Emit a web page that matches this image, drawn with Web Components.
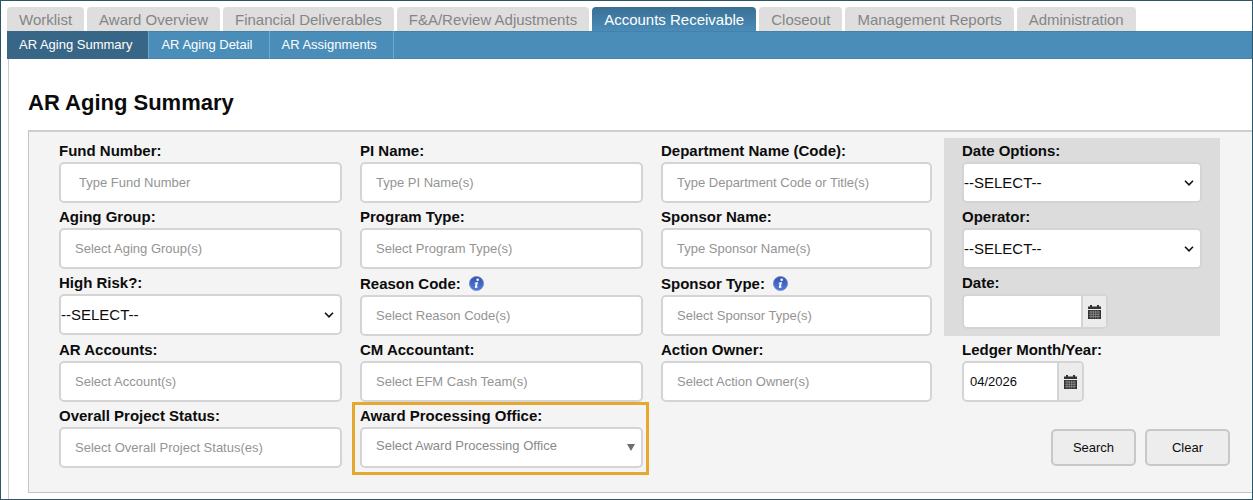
<!DOCTYPE html>
<html lang="en">
<head>
<meta charset="utf-8">
<meta name="viewport" content="width=device-width, initial-scale=1">
<title>AR Aging Summary</title>
<style>
  html, body { margin: 0; }
  body {
    font-family: "Liberation Sans", Arial, sans-serif;
    color: #0c0c0c;
  }
</style>
</head>
<body>

<page-frame>
  <nav-tabs slot="nav">
    <nav-tab>Worklist</nav-tab>
    <nav-tab>Award Overview</nav-tab>
    <nav-tab>Financial Deliverables</nav-tab>
    <nav-tab>F&amp;A/Review Adjustments</nav-tab>
    <nav-tab active>Accounts Receivable</nav-tab>
    <nav-tab>Closeout</nav-tab>
    <nav-tab>Management Reports</nav-tab>
    <nav-tab>Administration</nav-tab>
  </nav-tabs>
  <sub-nav slot="nav">
    <sub-nav-item active>AR Aging Summary</sub-nav-item>
    <sub-nav-item>AR Aging Detail</sub-nav-item>
    <sub-nav-item>AR Assignments</sub-nav-item>
  </sub-nav>

  <span slot="title">AR Aging Summary</span>

  <filter-panel>
    <form-field label="Fund Number:" placeholder="Type Fund Number" indent></form-field>
    <form-field label="PI Name:" placeholder="Type PI Name(s)"></form-field>
    <form-field label="Department Name (Code):" placeholder="Type Department Code or Title(s)" class="third"></form-field>
    <field-group>
      <form-field type="select" label="Date Options:" value="--SELECT--"></form-field>
      <form-field type="select" label="Operator:" value="--SELECT--"></form-field>
      <form-field type="date" label="Date:"></form-field>
    </field-group>

    <form-field label="Aging Group:" placeholder="Select Aging Group(s)"></form-field>
    <form-field label="Program Type:" placeholder="Select Program Type(s)"></form-field>
    <form-field label="Sponsor Name:" placeholder="Type Sponsor Name(s)" class="third"></form-field>

    <form-field type="select" label="High Risk?:" value="--SELECT--"></form-field>
    <form-field label="Reason Code:" placeholder="Select Reason Code(s)" info></form-field>
    <form-field label="Sponsor Type:" placeholder="Select Sponsor Type(s)" class="third" info></form-field>

    <form-field label="AR Accounts:" placeholder="Select Account(s)"></form-field>
    <form-field label="CM Accountant:" placeholder="Select EFM Cash Team(s)"></form-field>
    <form-field label="Action Owner:" placeholder="Select Action Owner(s)" class="third"></form-field>
    <form-field type="month" label="Ledger Month/Year:" value="04/2026" class="fourth"></form-field>

    <form-field label="Overall Project Status:" placeholder="Select Overall Project Status(es)"></form-field>
    <form-field type="combo" label="Award Processing Office:" value="Select Award Processing Office" highlight></form-field>
    <button-bar>
      <form-button>Search</form-button>
      <form-button>Clear</form-button>
    </button-bar>
  </filter-panel>
</page-frame>

<script>
/**
 * `<page-frame>` is the outer shell: navigation on top, then a title
 * and the content below it.
 */
class PageFrame extends HTMLElement {
  constructor() {
    super();
    const shadow = this.attachShadow({mode: 'open'});
    shadow.innerHTML = `<style>
    :host {
      display: block;
      box-sizing: border-box;
      min-height: 100vh;
      padding: 6px 0 0 6px;
      border: 1px solid #2c5568;
      background: #fff;
    }
    main {
      margin-left: 1px;
      padding: 28px 0 6px 19px;
      border-left: 1px solid #ccc;
    }
    h1 {
      margin: 0 0 12px;
      font-size: 22px;
      line-height: 31px;
    }
    </style>
    <slot name="nav"></slot>
    <main>
      <h1><slot name="title"></slot></h1>
      <slot></slot>
    </main>`;
  }
}
customElements.define('page-frame', PageFrame);

/**
 * `<nav-tabs>` is the row of top level tabs.
 */
class NavTabs extends HTMLElement {
  constructor() {
    super();
    const shadow = this.attachShadow({mode: 'open'});
    shadow.innerHTML = `<style>
    :host { display: block; }
    nav { display: flex; gap: 3px; }
    </style>
    <nav aria-label="Main"><slot></slot></nav>`;
  }
}
customElements.define('nav-tabs', NavTabs);

class NavTab extends HTMLElement {
  constructor() {
    super();
    const shadow = this.attachShadow({mode: 'open'});
    shadow.innerHTML = `<style>
    :host { display: block; }
    a {
      display: block;
      padding: 1px 12px 0;
      border-radius: 4px 4px 0 0;
      background: #dedede;
      color: #858585;
      font-size: 15px;
      line-height: 23px;
      text-decoration: none;
      white-space: nowrap;
    }
    :host([active]) a {
      background: linear-gradient(#3a6f94, #4a8cb8);
      color: #fff;
    }
    </style>
    <a href="#"><slot></slot></a>`;
  }
}
customElements.define('nav-tab', NavTab);

/**
 * `<sub-nav>` is the blue bar under the tabs.
 */
class SubNav extends HTMLElement {
  constructor() {
    super();
    const shadow = this.attachShadow({mode: 'open'});
    shadow.innerHTML = `<style>
    :host { display: block; }
    nav {
      display: flex;
      background: #4b8db9;
      box-shadow: inset 0 1px #4382ab, inset 0 -1px #4783aa;
    }
    </style>
    <nav aria-label="Section"><slot></slot></nav>`;
  }
}
customElements.define('sub-nav', SubNav);

class SubNavItem extends HTMLElement {
  constructor() {
    super();
    const shadow = this.attachShadow({mode: 'open'});
    shadow.innerHTML = `<style>
    :host { display: block; }
    a {
      display: block;
      padding: 0 16px 0 12px;
      border-right: 1px solid #6ea8cf;
      color: #fff;
      font-size: 13px;
      line-height: 28px;
      text-decoration: none;
      white-space: nowrap;
    }
    :host([active]) a { background: #386686; }
    </style>
    <a href="#"><slot></slot></a>`;
  }
}
customElements.define('sub-nav-item', SubNavItem);

/**
 * `<filter-panel>` lays its fields out in four columns. A `<field-group>`
 * takes the last column of the first three rows.
 */
class FilterPanel extends HTMLElement {
  constructor() {
    super();
    const shadow = this.attachShadow({mode: 'open'});
    shadow.innerHTML = `<style>
    :host {
      display: block;
      border: 1px solid #c4c4c4;
      border-top: 2px solid #cfcfcf;
      border-right: 0;
      background: #f4f4f4;
    }
    form {
      display: grid;
      grid-template-columns: 289fr 289fr 271fr 276fr;
      gap: 5px 12px;
      padding: 10px 32px 24px 30px;
    }
    ::slotted(form-field) { margin-right: 6px; }
    ::slotted(.third) { margin-right: 0; }
    ::slotted(.fourth) { margin-left: 18px; }
    ::slotted(field-group) {
      grid-column: 4;
      grid-row: 1 / span 3;
      margin-top: -4px;
    }
    ::slotted(button-bar) { grid-column: 4; margin: 20px -10px 0 0; }
    </style>
    <form><slot></slot></form>`;
  }
}
customElements.define('filter-panel', FilterPanel);

class FieldGroup extends HTMLElement {
  constructor() {
    super();
    const shadow = this.attachShadow({mode: 'open'});
    shadow.innerHTML = `<style>
    :host {
      display: flex;
      flex-direction: column;
      gap: 5px;
      padding: 4px 18px 0;
      background: #dcdcdc;
    }
    </style>
    <slot></slot>`;
  }
}
customElements.define('field-group', FieldGroup);

const infoIcon = `<svg width="15" height="15" viewBox="0 0 14 14" role="img" aria-label="Help">
  <defs><linearGradient id="blue" x2="0" y2="1">
    <stop offset="0" stop-color="#3550b4"/><stop offset="1" stop-color="#4e7fd8"/>
  </linearGradient></defs>
  <circle cx="7" cy="7" r="6.6" fill="url(#blue)" stroke="#6f87c4" stroke-width=".7"/>
  <circle cx="8.1" cy="3.5" r="1.2" fill="#fff"/>
  <path d="M5.3 6.2 8.4 5.6 7.3 10.1 8.5 9.7 8.2 10.6Q5 12.2 5.5 9.8L6.2 6.9 5.1 7Z" fill="#fff"/>
</svg>`;

const calendarIcon = `<svg width="13" height="14" viewBox="0 0 13 14" aria-hidden="true">
  <path d="M0 1.5h2V0h2v1.5h5V0h2v1.5h2V4H0ZM0 5h13v9H0Z" fill="#333"/>
  <path d="M1 7h11M1 9.3h11M1 11.6h11M3 5.5v8M5.3 5.5v8M7.7 5.5v8M10 5.5v8" stroke="#a8a8a8" stroke-width=".6"/>
</svg>`;

/**
 * Returns the markup of a control.
 *
 * @param {string} type - text, select, combo, date or month.
 * @returns {string}
 */
function controlMarkup(type) {
  switch (type) {
    case 'select':
      return `<select id="control"><option></option></select>
        <svg class="arrow" width="10" height="6" viewBox="0 0 10 6" aria-hidden="true">
          <path d="M1 .8 5 4.8 9 .8" fill="none" stroke="#111" stroke-width="1.6"/></svg>`;
    case 'combo':
      return `<select id="control"><option></option></select>
        <svg class="arrow" width="8" height="7" viewBox="0 0 8 7" aria-hidden="true">
          <path d="M0 0h8L4 7Z" fill="#6e6e6e"/></svg>`;
    case 'date':
    case 'month':
      return `<input id="control" type="text">
        <button type="button" aria-label="Open calendar">${calendarIcon}</button>`;
    default:
      return `<input id="control" type="text">`;
  }
}

/**
 * `<form-field>` is a label above its control.
 * Example:
 *    <form-field type="select" label="Operator:" value="--SELECT--"></form-field>
 */
class FormField extends HTMLElement {
  constructor() {
    super();
    const shadow = this.attachShadow({mode: 'open'});
    const type = this.getAttribute('type') || 'text';

    shadow.innerHTML = `<style>
    :host { display: block; position: relative; }
    .head {
      display: flex;
      align-items: center;
      gap: 8px;
      margin-bottom: 2px;
      font-size: 15px;
      font-weight: bold;
      line-height: 18px;
      white-space: nowrap;
    }
    :host([info]) .head { line-height: 19px; }
    .control {
      display: grid;
      grid-template-columns: minmax(0, 1fr) auto;
      height: 41px;
      box-sizing: border-box;
      border: 2px solid #d4d4d4;
      border-radius: 5px;
      background: #fff;
      overflow: hidden;
    }
    input, select {
      box-sizing: border-box;
      width: 100%;
      height: 100%;
      margin: 0;
      padding: 0 14px;
      border: 0;
      background: none;
      color: #0c0c0c;
      font: 13px "Liberation Sans", Arial, sans-serif;
      appearance: none;
    }
    select { grid-area: 1 / 1 / 2 / 3; padding: 0; font-size: 15px; }
    input::placeholder { color: #949494; opacity: 1; }
    :host([indent]) input { padding: 0 18px; }
    .combo select { padding: 0 14px 4px; color: #8a8a8a; font-size: 13px; }
    .arrow { grid-area: 1 / 2; align-self: center; margin-right: 6px; pointer-events: none; }
    .date, .month { width: 146px; }
    .date { height: 35px; }
    .month { width: 122px; }
    .month input { padding: 0 6px; }
    button {
      display: flex;
      align-items: center;
      justify-content: center;
      width: 25px;
      padding: 0;
      border: 0;
      border-left: 2px solid #d4d4d4;
      background: #ececec;
    }
    :host([highlight])::after {
      content: "";
      position: absolute;
      inset: -5px -6px -7px -8px;
      border: 3px solid #e5a92f;
      pointer-events: none;
    }
    </style>
    <div class="head"><label for="control"></label>${this.hasAttribute('info') ? infoIcon : ''}</div>
    <div class="control ${type}">${controlMarkup(type)}</div>`;

    shadow.querySelector('label').textContent = this.getAttribute('label');

    const value = this.getAttribute('value') || '';
    const option = shadow.querySelector('option');
    if (option) {
      option.textContent = value;
    } else {
      const input = shadow.querySelector('input');
      input.value = value;
      input.placeholder = this.getAttribute('placeholder') || '';
    }
  }
}
customElements.define('form-field', FormField);

class ButtonBar extends HTMLElement {
  constructor() {
    super();
    const shadow = this.attachShadow({mode: 'open'});
    shadow.innerHTML = `<style>
    :host { display: flex; align-items: center; justify-content: flex-end; gap: 9px; }
    </style>
    <slot></slot>`;
  }
}
customElements.define('button-bar', ButtonBar);

class FormButton extends HTMLElement {
  constructor() {
    super();
    const shadow = this.attachShadow({mode: 'open'});
    shadow.innerHTML = `<style>
    :host { display: block; }
    button {
      min-width: 85px;
      height: 37px;
      border: 2px solid #c8c8c8;
      border-radius: 5px;
      background: #ededed;
      color: #0c0c0c;
      font: 13px "Liberation Sans", Arial, sans-serif;
    }
    </style>
    <button type="button"><slot></slot></button>`;
  }
}
customElements.define('form-button', FormButton);
</script>
</body>
</html>
